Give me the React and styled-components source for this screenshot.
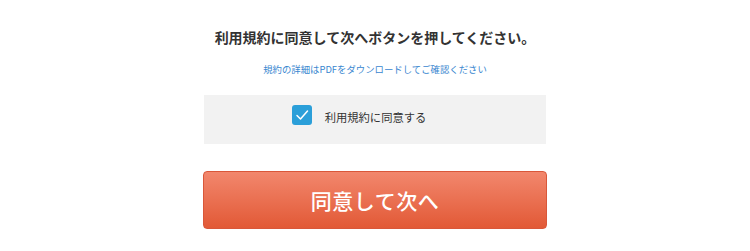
import React from "react";
import styled, { createGlobalStyle } from "styled-components";

const Global = createGlobalStyle`
  html, body { margin: 0; padding: 0; background: #fff; }
  body { font-family: "Noto Sans CJK JP", "Noto Sans", sans-serif; }
`;

const Page = styled.div`
  width: 750px;
  height: 251px;
  display: flex;
  flex-direction: column;
  align-items: center;
  padding-top: 25px;
  box-sizing: border-box;
`;

const Container = styled.div`
  width: 344px;
  display: flex;
  flex-direction: column;
  align-items: center;
`;

const Title = styled.h2`
  margin: 0;
  font-size: 14px;
  font-weight: 700;
  color: #333;
  line-height: 24px;
`;

const Link = styled.a`
  margin-top: 12px;
  font-size: 9.4px;
  color: #3a87d0;
  text-decoration: none;
  line-height: 16px;
`;

const AgreeBox = styled.label`
  margin-top: 18px;
  width: 342px;
  height: 49px;
  background: #f2f2f2;
  display: flex;
  align-items: center;
  justify-content: center;
  gap: 13px;
  padding-right: 32px;
  padding-bottom: 5px;
  box-sizing: border-box;
`;

const Check = styled.span`
  width: 20px;
  height: 20px;
  border-radius: 3px;
  background: #2b9fd9;
  display: flex;
  align-items: center;
  justify-content: center;
  margin-top: -4px;
`;

const Label = styled.span`
  font-size: 11.3px;
  color: #333;
`;

const Button = styled.button`
  margin-top: 27px;
  width: 344px;
  height: 58px;
  border: 1px solid #d9573a;
  border-radius: 4px;
  background: linear-gradient(to bottom, #f2876d, #e25936);
  color: #fff;
  font-family: inherit;
  font-size: 21px;
  font-weight: 500;
  letter-spacing: 0.5px;
  cursor: pointer;
`;

export default function App() {
  return (
    <>
      <Global />
      <Page>
        <Container>
          <Title>利用規約に同意して次へボタンを押してください。</Title>
          <Link href="#">規約の詳細はPDFをダウンロードしてご確認ください</Link>
          <AgreeBox>
            <Check>
              <svg width="14" height="12" viewBox="0 0 14 12">
                <path d="M2 6.5 L5.5 10 L12.5 2" fill="none" stroke="#fff" strokeWidth="1.5" strokeLinecap="round" strokeLinejoin="round" />
              </svg>
            </Check>
            <Label>利用規約に同意する</Label>
          </AgreeBox>
          <Button>同意して次へ</Button>
        </Container>
      </Page>
    </>
  );
}
